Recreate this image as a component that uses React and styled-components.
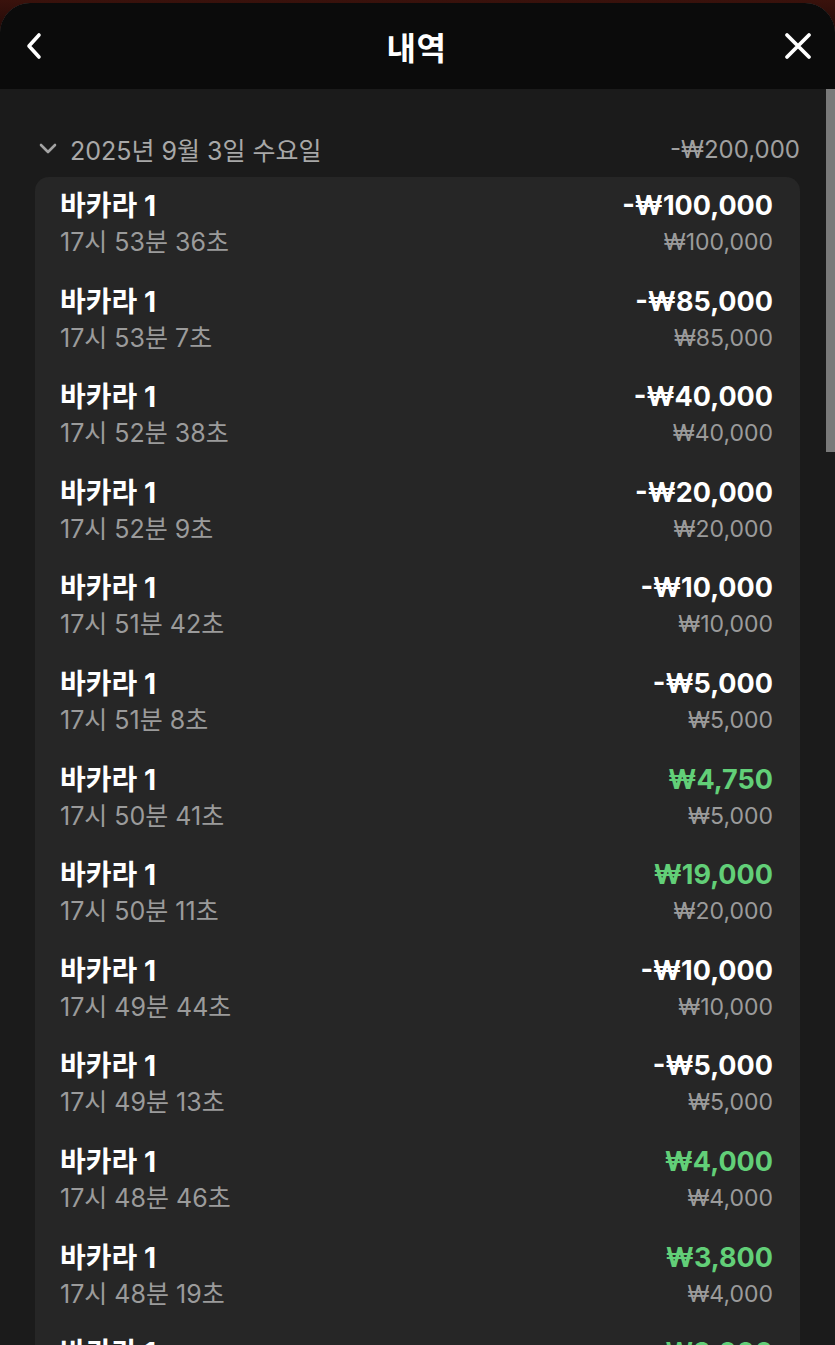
import React from "react";
import styled, { createGlobalStyle } from "styled-components";

const GlobalStyle = createGlobalStyle`
  html, body {
    margin: 0;
    padding: 0;
    background: linear-gradient(180deg, #3a120c 0%, #1c0806 40px, #1b1b1b 41px);
  }
  body {
    font-family: Inter, "Noto Sans CJK KR", sans-serif;
    -webkit-font-smoothing: antialiased;
  }
`;

const rows = [
  { time: "17시 53분 36초", result: "-₩100,000", bet: "₩100,000", win: false },
  { time: "17시 53분 7초", result: "-₩85,000", bet: "₩85,000", win: false },
  { time: "17시 52분 38초", result: "-₩40,000", bet: "₩40,000", win: false },
  { time: "17시 52분 9초", result: "-₩20,000", bet: "₩20,000", win: false },
  { time: "17시 51분 42초", result: "-₩10,000", bet: "₩10,000", win: false },
  { time: "17시 51분 8초", result: "-₩5,000", bet: "₩5,000", win: false },
  { time: "17시 50분 41초", result: "₩4,750", bet: "₩5,000", win: true },
  { time: "17시 50분 11초", result: "₩19,000", bet: "₩20,000", win: true },
  { time: "17시 49분 44초", result: "-₩10,000", bet: "₩10,000", win: false },
  { time: "17시 49분 13초", result: "-₩5,000", bet: "₩5,000", win: false },
  { time: "17시 48분 46초", result: "₩4,000", bet: "₩4,000", win: true },
  { time: "17시 48분 19초", result: "₩3,800", bet: "₩4,000", win: true },
  { time: "17시 47분 52초", result: "₩3,000", bet: "₩3,000", win: true },
];

export default function App() {
  return (
    <>
      <GlobalStyle />
      <Sheet>
        <Header>
          <IconButton aria-label="back">
            <svg width="22" height="28" viewBox="0 0 22 28" fill="none">
              <path d="M15 3 L5 14 L15 25" stroke="#fff" strokeWidth="3.6" strokeLinecap="round" strokeLinejoin="round" />
            </svg>
          </IconButton>
          <Title>내역</Title>
          <IconButton aria-label="close">
            <svg width="28" height="28" viewBox="0 0 28 28" fill="none">
              <path d="M3 3 L25 25 M25 3 L3 25" stroke="#fff" strokeWidth="3.8" strokeLinecap="round" />
            </svg>
          </IconButton>
        </Header>
        <Content>
          <DateRow>
            <DateLabel>
              <svg width="20" height="12" viewBox="0 0 20 12" fill="none">
                <path d="M3 2 L10 9 L17 2" stroke="#a3a3a3" strokeWidth="2.6" strokeLinecap="round" strokeLinejoin="round" />
              </svg>
              2025년 9월 3일 수요일
            </DateLabel>
            <DateTotal>-₩200,000</DateTotal>
          </DateRow>
          <Card>
            {rows.map((r, i) => (
              <Row key={i}>
                <Left>
                  <GameName>바카라 1</GameName>
                  <Sub>{r.time}</Sub>
                </Left>
                <Right>
                  <Amount $win={r.win}>{r.result}</Amount>
                  <Sub $right>{r.bet}</Sub>
                </Right>
              </Row>
            ))}
          </Card>
          <Thumb />
        </Content>
      </Sheet>
    </>
  );
}

const Sheet = styled.div`
  margin-top: 3px;
  height: 1342px;
  display: flex;
  flex-direction: column;
  border-radius: 30px 30px 0 0;
  overflow: hidden;
  background: #1b1b1b;
  box-shadow: inset 0 1px 0 rgba(255, 255, 255, 0.15);
`;

const Header = styled.div`
  height: 86px;
  flex-shrink: 0;
  background: #0b0b0b;
  display: flex;
  align-items: center;
  justify-content: space-between;
  padding: 0 22px 0 20px;
  border-radius: 30px 30px 0 0;
`;

const IconButton = styled.div`
  width: 30px;
  height: 30px;
  display: flex;
  align-items: center;
  justify-content: center;
`;

const Title = styled.h1`
  margin: 0;
  color: #fff;
  font-size: 32px;
  font-weight: 700;
  font-family: "Noto Sans CJK KR", sans-serif;
  letter-spacing: 0.5px;
`;

const Content = styled.div`
  position: relative;
  flex: 1;
  overflow: hidden;
  padding: 45px 35px 0;
`;

const DateRow = styled.div`
  display: flex;
  align-items: center;
  justify-content: space-between;
  height: 30px;
  margin-bottom: 13px;
`;

const DateLabel = styled.div`
  display: flex;
  align-items: center;
  gap: 12px;
  padding-left: 3px;
  color: #a8a8a8;
  font-size: 25px;
`;

const DateTotal = styled.div`
  color: #a0a0a0;
  font-size: 24px;
`;

const Card = styled.div`
  background: #262626;
  border-radius: 14px;
`;

const Row = styled.div`
  display: flex;
  justify-content: space-between;
  padding: 12px 27px 15.6px 25px;
`;

const Left = styled.div`
  display: flex;
  flex-direction: column;
  gap: 4px;
`;

const Right = styled(Left)`
  align-items: flex-end;
`;

const GameName = styled.div`
  color: #fff;
  font-size: 28px;
  font-weight: 700;
  line-height: 34px;
`;

const Amount = styled.div`
  color: ${(p) => (p.$win ? "#62cf78" : "#fff")};
  font-size: 27px;
  font-weight: 700;
  line-height: 34px;
`;

const Sub = styled.div`
  color: #9b9b9b;
  font-size: ${(p) => (p.$right ? "23px" : "25px")};
  line-height: 30px;
`;

const Thumb = styled.div`
  position: absolute;
  top: 0;
  right: 0;
  width: 9px;
  height: 363px;
  background: #7a7a7a;
`;
